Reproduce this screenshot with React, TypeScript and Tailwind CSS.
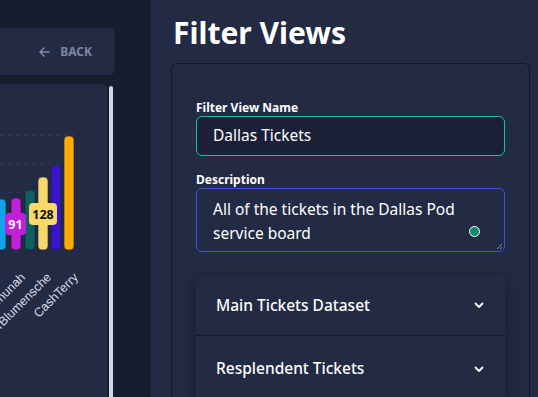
import React from "react";

const bars = [
  { x: -4, top: 199, color: "#0ea5e9" },
  { x: 11, top: 198, color: "#c41fd8" },
  { x: 25, top: 190, color: "#0f5f5c" },
  { x: 38, top: 177, color: "#f6d86b" },
  { x: 51, top: 165, color: "#3b12c7" },
  { x: 64, top: 136, color: "#ffab00" },
];

const labels = [
  { x: 24, text: "Maimunah" },
  { x: 50, text: "ZeiderBlumensche" },
  { x: 77, text: "CashTerry" },
];

function Chart() {
  // card starts at y=84 on screen, so shift everything by 84
  const oy = 84;
  return (
    <svg width="123" height="313" viewBox="-16 0 123 313" className="block">
      {[135, 164, 192, 220].map((y) => (
        <line key={y} x1={-16} x2={74} y1={y - oy} y2={y - oy} stroke="#363e5c" strokeDasharray="4 4" />
      ))}
      {bars.map((b) => (
        <rect
          key={b.x}
          x={b.x}
          y={b.top - oy}
          width={10}
          height={250 - b.top}
          rx={4}
          fill={b.color}
          stroke="#1b2036"
          strokeWidth={0.6}
        />
      ))}
      <rect x={5} y={213 - oy} width={21} height={22} rx={4} fill="#c41fd8" />
      <text x={15.5} y={229 - oy} textAnchor="middle" fill="#fff" fontSize="12.5" fontWeight="700" fontFamily="Noto Sans, sans-serif">
        91
      </text>
      <rect x={29} y={203 - oy} width={28} height={22} rx={4} fill="#f6d86b" />
      <text x={43} y={219 - oy} textAnchor="middle" fill="#111" fontSize="12.5" fontWeight="700" fontFamily="Noto Sans, sans-serif">
        128
      </text>
      {labels.map((l) => (
        <text
          key={l.text}
          x={l.x + 2}
          y={278 - oy}
          textAnchor="end"
          transform={`rotate(-45 ${l.x + 2} ${278 - oy})`}
          fill="#d7dbe6"
          fontSize="12.5"
          fontFamily="Liberation Sans, Arial, sans-serif"
        >
          {l.text}
        </text>
      ))}
    </svg>
  );
}

function Chevron() {
  return (
    <svg width="10" height="7" viewBox="0 0 10 7" fill="none">
      <path d="M1.5 1.5 5 5l3.5-3.5" stroke="#fff" strokeWidth="1.8" strokeLinecap="round" strokeLinejoin="round" />
    </svg>
  );
}

export default function App() {
  return (
    <div className="flex w-[538px] h-[397px] overflow-hidden font-['Noto_Sans',sans-serif] text-white">
      <div className="w-[151px] shrink-0 bg-[#181c2f] overflow-hidden flex flex-col">
        <div className="mt-[28px] -ml-4 mr-[36px] h-[47px] rounded-r-md bg-[#222a44] flex items-center justify-end pr-[23px] gap-[10px] text-[#7d87a6]">
          <svg width="11" height="10" viewBox="0 0 11 10" fill="none">
            <path d="M10.2 5H1.2M5 1 1 5l4 4" stroke="currentColor" strokeWidth="1.6" strokeLinecap="round" strokeLinejoin="round" />
          </svg>
          <span className="text-[12px] font-bold">BACK</span>
        </div>
        <div className="flex mt-[9px] flex-1">
          <div className="w-[123px] -ml-4 rounded-tr-md bg-[#222a44] overflow-hidden">
            <Chart />
          </div>
          <div className="w-[4px] ml-[2px] mt-[2px] rounded-t-sm bg-[#d0d4e4]" />
        </div>
      </div>

      <div className="flex-1 bg-[#222a44] pl-[20px] pr-[8px]">
        <h1 className="pl-[2px] pt-[15px] text-[30px] leading-[36px] font-bold">Filter Views</h1>
        <div className="mt-[12px] h-[400px] rounded-md border border-[#131729] px-[24px] pt-[36px]">
          <label className="block text-[12px] leading-[16px] font-bold">Filter View Name</label>
          <div className="h-[40px] rounded-md border border-[#1ec08f] bg-[#1b1f37] px-[16px] flex items-center text-[15.5px]">
            Dallas Tickets
          </div>
          <label className="block mt-[16px] text-[12px] leading-[16px] font-bold">Description</label>
          <div className="relative h-[64px] rounded-md border border-[#3457d5] bg-[#222a44] px-[16px] pt-[8px] text-[15.5px] leading-[24px]">
            All of the tickets in the Dallas Pod
            <br />
            service board
            <span className="absolute right-[24px] top-[37px] w-[11px] h-[11px] rounded-full bg-[#0b8a72] border-[1.5px] border-white" />
            <svg className="absolute right-[1px] bottom-[1px]" width="7" height="7" viewBox="0 0 7 7">
              <path d="M1 6 6 1M4 6l2-2" stroke="#9aa0b4" strokeWidth="0.8" />
            </svg>
          </div>
          <div className="mt-[24px] bg-[#222a44] shadow-[0_4px_12px_rgba(0,0,0,0.35)]">
            <div className="h-[60px] flex items-center justify-between pl-[20px] pr-[21px] border-b border-[#161a2c]">
              <span className="text-[15.5px] font-medium">Main Tickets Dataset</span>
              <Chevron />
            </div>
            <div className="h-[66px] flex items-center justify-between pl-[20px] pr-[21px]">
              <span className="text-[15.5px] font-medium">Resplendent Tickets</span>
              <Chevron />
            </div>
          </div>
        </div>
      </div>
    </div>
  );
}
